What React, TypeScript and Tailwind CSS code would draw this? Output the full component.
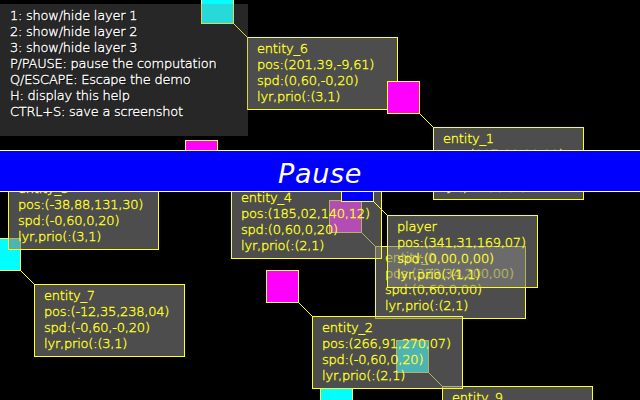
const FONT = "font-['DejaVu_Sans_Light','DejaVu_Sans',sans-serif] font-extralight";

type Entity = {
  name: string;
  x: number;
  y: number;
  fill: string;
  info: string[];
};

const entities: Entity[] = [
  { name: "entity_9", x: 396, y: 340, fill: "bg-[#00ffff]", info: ["pos:(396,88,340,22)", "spd:(0,60,0,20)", "lyr,prio(:(3,1)"] },
  { name: "entity_8", x: 320, y: 388, fill: "bg-[#00ffff]", info: [] },
  { name: "entity_7", x: -12, y: 238, fill: "bg-[#00ffff]", info: ["pos:(-12,35,238,04)", "spd:(-0,60,-0,20)", "lyr,prio(:(3,1)"] },
  { name: "entity_6", x: 201, y: -9, fill: "bg-[#00ffff]", info: ["pos:(201,39,-9,61)", "spd:(0,60,-0,20)", "lyr,prio(:(3,1)"] },
  { name: "entity_5", x: -38, y: 131, fill: "bg-[#00ffff]", info: ["pos:(-38,88,131,30)", "spd:(-0,60,0,20)", "lyr,prio(:(3,1)"] },
  { name: "entity_0", x: 329, y: 200, fill: "bg-[#ff00ff]", info: ["pos:(329,34,200,00)", "spd:(0,60,0,00)", "lyr,prio(:(2,1)"] },
  { name: "entity_4", x: 185, y: 140, fill: "bg-[#ff00ff]", info: ["pos:(185,02,140,12)", "spd:(0,60,0,20)", "lyr,prio(:(2,1)"] },
  { name: "entity_2", x: 266, y: 270, fill: "bg-[#ff00ff]", info: ["pos:(266,91,270,07)", "spd:(-0,60,0,20)", "lyr,prio(:(2,1)"] },
  { name: "entity_1", x: 387, y: 81, fill: "bg-[#ff00ff]", info: ["pos:(387,61,81,30)", "spd:(0,60,-0,20)", "lyr,prio(:(2,1)"] },
  { name: "player", x: 341, y: 169, fill: "bg-[#0000ff]", info: ["pos:(341,31,169,07)", "spd:(0,00,0,00)", "lyr,prio(:(1,1)"] },
];

const help = [
  "1: show/hide layer 1",
  "2: show/hide layer 2",
  "3: show/hide layer 3",
  "P/PAUSE: pause the computation",
  "Q/ESCAPE: Escape the demo",
  "H: display this help",
  "CTRL+S: save a screenshot",
];

function EntityNode({ name, x, y, fill, info }: Entity) {
  return (
    <div className="absolute" style={{ left: x, top: y }}>
      <div className={`size-[33px] border border-[#ffff40] ${fill}`} />
      {info.length > 0 && (
        <>
          <svg className="absolute top-8 left-8" width="15" height="15" shapeRendering="crispEdges">
            <path d="M0.5 0.5L14.5 14.5" stroke="#ffff30" />
          </svg>
          <div className="absolute top-[46px] left-[46px] h-[73px] w-[151px] border border-[#ffff20] bg-[#808080]/60 pt-[3px] pl-[9px] text-[13px] leading-4 tracking-[-0.2px] whitespace-nowrap text-[#ffff20] [-webkit-text-stroke:0.35px_#ffff20]">
            <p>{name}</p>
            {info.map((line) => (
              <p key={line}>{line}</p>
            ))}
          </div>
        </>
      )}
    </div>
  );
}

export default function App() {
  return (
    <main className={`relative h-[400px] w-[640px] overflow-hidden bg-black ${FONT}`}>
      {entities.map((entity) => (
        <EntityNode key={entity.name} {...entity} />
      ))}
      <aside className="absolute top-1 left-0 h-[132px] w-[248px] bg-[#808080]/30 pt-1 pl-[10px] text-[13px] leading-4 tracking-[-0.24px] whitespace-nowrap text-white [-webkit-text-stroke:0.35px_white] [text-shadow:1px_1px_0_#000]">
        {help.map((line) => (
          <p key={line}>{line}</p>
        ))}
      </aside>
      <div className="absolute top-[150px] left-0 flex h-[42px] w-full items-center justify-center border-y border-white bg-[#0000ff] pt-[7px] font-['DejaVu_Sans',sans-serif] text-[27px] font-normal tracking-[0.7px] text-white italic">
        Pause
      </div>
    </main>
  );
}
